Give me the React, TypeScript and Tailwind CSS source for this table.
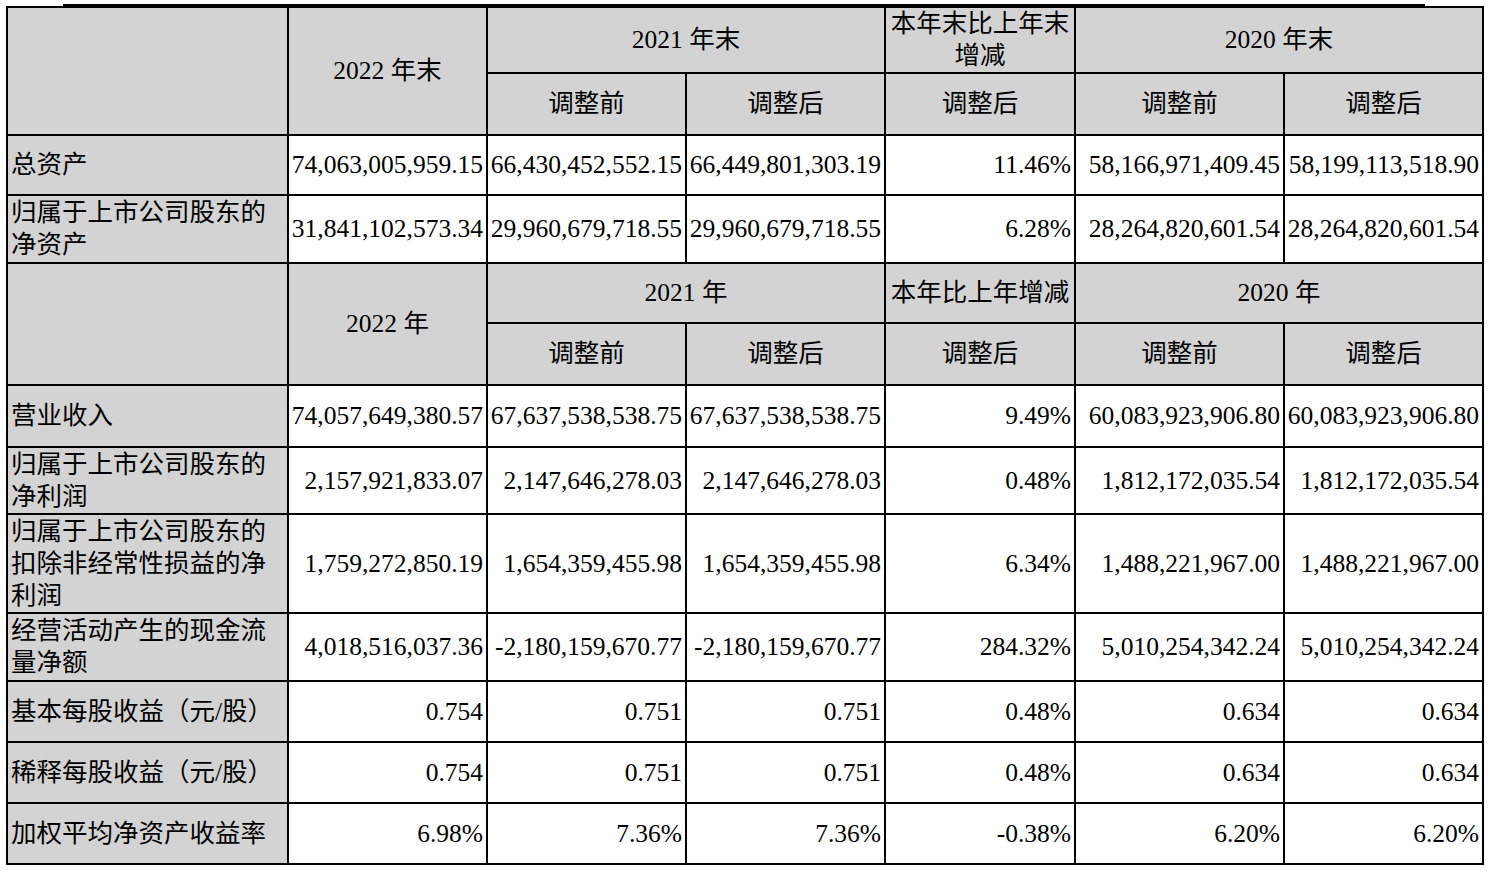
import React from 'react'

type Row = { label: string; h: string; values: string[] }

const balanceRows: Row[] = [
  {
    label: '总资产',
    h: 'h-[60px]',
    values: ['74,063,005,959.15', '66,430,452,552.15', '66,449,801,303.19', '11.46%', '58,166,971,409.45', '58,199,113,518.90'],
  },
  {
    label: '归属于上市公司股东的净资产',
    h: 'h-[68px]',
    values: ['31,841,102,573.34', '29,960,679,718.55', '29,960,679,718.55', '6.28%', '28,264,820,601.54', '28,264,820,601.54'],
  },
]

const incomeRows: Row[] = [
  {
    label: '营业收入',
    h: 'h-[62px]',
    values: ['74,057,649,380.57', '67,637,538,538.75', '67,637,538,538.75', '9.49%', '60,083,923,906.80', '60,083,923,906.80'],
  },
  {
    label: '归属于上市公司股东的净利润',
    h: 'h-[67px]',
    values: ['2,157,921,833.07', '2,147,646,278.03', '2,147,646,278.03', '0.48%', '1,812,172,035.54', '1,812,172,035.54'],
  },
  {
    label: '归属于上市公司股东的扣除非经常性损益的净利润',
    h: 'h-[99px]',
    values: ['1,759,272,850.19', '1,654,359,455.98', '1,654,359,455.98', '6.34%', '1,488,221,967.00', '1,488,221,967.00'],
  },
  {
    label: '经营活动产生的现金流量净额',
    h: 'h-[68px]',
    values: ['4,018,516,037.36', '-2,180,159,670.77', '-2,180,159,670.77', '284.32%', '5,010,254,342.24', '5,010,254,342.24'],
  },
  {
    label: '基本每股收益（元/股）',
    h: 'h-[61px]',
    values: ['0.754', '0.751', '0.751', '0.48%', '0.634', '0.634'],
  },
  {
    label: '稀释每股收益（元/股）',
    h: 'h-[61px]',
    values: ['0.754', '0.751', '0.751', '0.48%', '0.634', '0.634'],
  },
  {
    label: '加权平均净资产收益率',
    h: 'h-[61px]',
    values: ['6.98%', '7.36%', '7.36%', '-0.38%', '6.20%', '6.20%'],
  },
]

const cell = 'border-2 border-black align-middle p-0'
const head = `${cell} bg-[#d3d3d3] text-center`

function HeaderRows({ year, prev, change, older, h1 }: { year: string; prev: string; change: string; older: string; h1: string }) {
  return (
    <>
      <tr className={h1}>
        <td rowSpan={2} className={head} />
        <td rowSpan={2} className={head}>{year}</td>
        <td colSpan={2} className={head}>{prev}</td>
        <td className={`${head} px-[4px]`}>{change}</td>
        <td colSpan={2} className={head}>{older}</td>
      </tr>
      <tr className="h-[62px]">
        <td className={head}>调整前</td>
        <td className={head}>调整后</td>
        <td className={head}>调整后</td>
        <td className={head}>调整前</td>
        <td className={head}>调整后</td>
      </tr>
    </>
  )
}

function DataRow({ row }: { row: Row }) {
  return (
    <tr className={row.h}>
      <td className={`${cell} bg-[#d3d3d3] text-left pl-[3px] pr-[6px]`}>{row.label}</td>
      {row.values.map((v, i) => (
        <td key={i} className={`${cell} bg-white text-right pr-[3px] whitespace-nowrap`}>
          {v}
        </td>
      ))}
    </tr>
  )
}

export default function App() {
  return (
    <div className="min-h-screen bg-white pt-[4px] text-black text-[25.5px] leading-[32px] font-['Liberation_Serif','Noto_Sans_CJK_SC',serif]">
      {/* rule above the table */}
      <div className="ml-[63px] w-[1362px] h-[2px] bg-black" />
      <table className="ml-[6px] w-[1476px] table-fixed border-collapse">
        <colgroup>
          <col className="w-[281px]" />
          <col className="w-[199px]" />
          <col className="w-[199px]" />
          <col className="w-[199px]" />
          <col className="w-[190px]" />
          <col className="w-[209px]" />
          <col className="w-[199px]" />
        </colgroup>
        <tbody>
          <HeaderRows year="2022 年末" prev="2021 年末" change="本年末比上年末增减" older="2020 年末" h1="h-[66px]" />
          {balanceRows.map((r) => (
            <DataRow key={r.label} row={r} />
          ))}
          <HeaderRows year="2022 年" prev="2021 年" change="本年比上年增减" older="2020 年" h1="h-[60px]" />
          {incomeRows.map((r) => (
            <DataRow key={r.label} row={r} />
          ))}
        </tbody>
      </table>
    </div>
  )
}
